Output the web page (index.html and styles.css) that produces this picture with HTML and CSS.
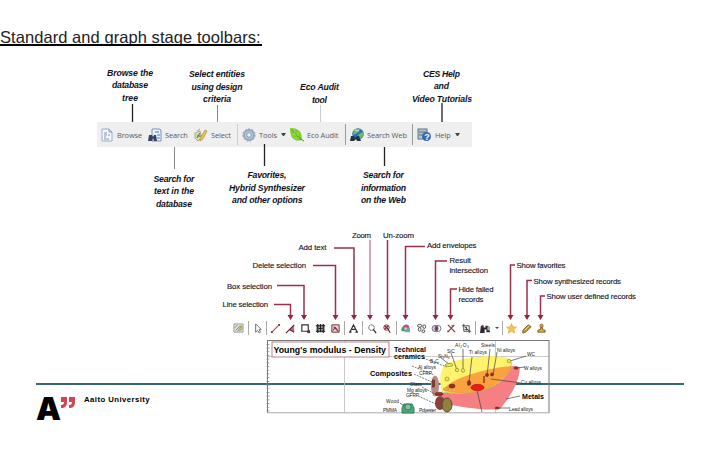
FILE: index.html
```html
<!DOCTYPE html>
<html lang="en">
<head>
<meta charset="utf-8">
<title>Standard and graph stage toolbars</title>
<link rel="stylesheet" href="styles.css">
</head>
<body>
<main class="slide">
<h1 class="title">Standard and graph stage toolbars:</h1>

<svg class="notes notes-top" viewBox="0 60 720 62">
  <g class="caption">
    <text x="107" y="75.500" textLength="46">Browse the</text><text x="112" y="88" textLength="36">database</text><text x="122" y="101" textLength="16">tree</text>
    <text x="189" y="77" textLength="56">Select entities</text><text x="191.500" y="89.500" textLength="51">using design</text><text x="203" y="102" textLength="28">criteria</text>
    <text x="300" y="90" textLength="39">Eco Audit</text><text x="312" y="103" textLength="15">tool</text>
    <text x="423" y="77" textLength="37">CES Help</text><text x="434" y="89" textLength="15">and</text><text x="412" y="102" textLength="60">Video Tutorials</text>
  </g>
  <path class="lead" d="M132.500 104V122M442 103V122"/><path class="lead soft" d="M217.500 105V122"/><path class="lead faint" d="M320.500 105V122"/>
</svg>

<nav class="toolbar">
  <svg class="icon" viewBox="0 0 14 16"><path d="M2 2h7l3 3v9H2z" fill="#f4f8fc" stroke="#9aaec8"/><path d="M4 6h3M4 8h3M4 10h2M8 8h2M4 12h5" stroke="#7e94b6"/><path d="M9 2v3h3" fill="none" stroke="#8097b4"/></svg>
  <span>Browse</span>
  <svg class="icon" viewBox="0 0 14 16"><path d="M4 2h8l1 2v10H4z" fill="#e9f3fd" stroke="#7894b6"/><path d="M7 5h4M9 8h3M9 11h3" stroke="#4e79ac"/><path d="M1 8h3l1 2 1-2h2l1 6H6l-1-3-1 3H0z" fill="#34435e"/></svg>
  <span>Search</span>
  <svg class="icon" viewBox="0 0 14 16"><path d="M1 6l5-2 2 7-4 3-3-3z" fill="#d4dfae" stroke="#a5b588"/><path d="M3 11l3-5M3 9h4" stroke="#58754b"/><path d="M6 12l5-9 2 1-4 8-3 2z" fill="#f0c64e" stroke="#9a813f" stroke-width=".6"/><path d="M3 4l3-2" stroke="#ce9696"/></svg>
  <span>Select</span>
  <i class="divider light"></i>
  <svg class="icon" viewBox="0 0 14 16"><circle cx="7" cy="8" r="5" fill="#b9cbdc" stroke="#8fa5bb" stroke-width="2"/><circle cx="7" cy="8" r="6.300" fill="none" stroke="#a3b2c1" stroke-dasharray="2 1.500"/><circle cx="7" cy="8" r="2.300" fill="#f3f5f7" stroke="#7892a9"/></svg>
  <span>Tools</span><b class="caret"></b>
  <svg class="icon" viewBox="0 0 14 16"><path d="M0 1c8 0 12 3 12 12-7 2-12-1-12-12z" fill="#80ce29"/><path d="M2 3c4 4 6 8 12 11" fill="none" stroke="#4c9625"/><path d="M4 3l1 4M2 7l5 1M8 5v4M4 11l5 0" stroke="#b0e568" stroke-width=".6"/></svg>
  <span>Eco Audit</span>
  <i class="divider"></i>
  <svg class="icon" viewBox="0 0 14 16"><circle cx="8" cy="7" r="5.800" fill="#2874b7"/><path d="M4 3l4-2 2 2-3 3-4 2zM9 7l4-2 1 3-4 4-2-2z" fill="#72b96d"/><path d="M5 3l4 1" stroke="#c5e6f4"/><path d="M1 9h3l1 2 2-2h2l2 5H7l-1-2-2 2H0z" fill="#25324c"/></svg>
  <span>Search Web</span>
  <i class="divider"></i>
  <svg class="icon" viewBox="0 0 14 16"><rect x="1" y="2" width="9" height="10" fill="#b7c6d4" stroke="#58718c"/><path d="M2 5h7M2 8h5" stroke="#52687f"/><circle cx="9.500" cy="9.500" r="4.500" fill="#376bb0"/><text x="7.200" y="13" class="question">?</text></svg>
  <span>Help</span><b class="caret"></b>
</nav>

<svg class="notes notes-mid" viewBox="0 147 720 173">
  <g class="caption">
    <text x="153.500" y="182" textLength="41">Search for</text><text x="154" y="194" textLength="40">text in the</text><text x="156" y="206.500" textLength="36">database</text>
    <text x="247.500" y="178" textLength="39">Favorites,</text><text x="229" y="191" textLength="76">Hybrid Synthesizer</text><text x="232" y="203" textLength="70.500">and other options</text>
    <text x="363" y="178" textLength="41">Search for</text><text x="361" y="191" textLength="45">information</text><text x="361" y="203" textLength="45">on the Web</text>
  </g>
  <path class="lead" d="M264.500 144V166M384.500 147V166"/><path class="lead soft" d="M174.500 147V169"/>
  <g class="label">
    <text x="352" y="238" textLength="19">Zoom</text><text x="383" y="238" textLength="31">Un-zoom</text><text x="298.500" y="250" textLength="28">Add text</text>
    <text x="252.500" y="268" textLength="53.500">Delete selection</text><text x="227" y="288.500" textLength="45">Box selection</text><text x="222.500" y="307" textLength="45.500">Line selection</text>
    <text x="427" y="248" textLength="49.500">Add envelopes</text><text x="449.500" y="263" textLength="21.500">Result</text><text x="449.500" y="273" textLength="38.500">intersection</text>
    <text x="458.500" y="291.500" textLength="35">Hide failed</text><text x="458.500" y="302" textLength="25">records</text><text x="516.500" y="268" textLength="49">Show favorites</text>
    <text x="533.500" y="283.500" textLength="87.500">Show synthesized records</text><text x="546.500" y="299" textLength="89.500">Show user defined records</text>
  </g>
  <path class="arrow" d="M274 304.500H290.500V316M277 285.500H304V316M313 265.500H335.500V316M334 248H354V316M387.500 240V316M425 246.500H405.500V316M447 261H435.500V316M457 289H450.500V316M515 265H510.500V316M532 280.500H527V316M545 296H540.500V316"/>
  <path class="arrow pale" d="M370 240V316"/>
  <path class="heads" d="M287.500 315h6l-3 5zM301 315h6l-3 5zM332.500 315h6l-3 5zM351 315h6l-3 5zM367 315h6l-3 5zM384.500 315h6l-3 5zM402.500 315h6l-3 5zM432.500 315h6l-3 5zM447.500 315h6l-3 5zM507.500 315h6l-3 5zM524 315h6l-3 5zM537.500 315h6l-3 5z"/>
</svg>

<nav class="stage-tools">
  <svg viewBox="0 0 12 12"><path d="M1 1h10v9H1z" fill="#e4e2ce" stroke="#999"/><path d="M2 5l3-3M3 8l5-5M5 9l5-6M7 9l3-3" stroke="#6b8480"/><path d="M7 3h3v3H7z" fill="#bba74c"/></svg><i></i>
  <svg viewBox="0 0 12 12"><path d="M4 1v9l2-2 2 3 1-1-1-3h2z" fill="#fff" stroke="#666"/></svg><i></i>
  <svg viewBox="0 0 12 12"><path d="M2 10l8-8" stroke="#a65460" stroke-width="1.300"/><path d="M1 9h2v2H1zM9 1h2v2H9z" fill="#8c2736"/></svg>
  <svg viewBox="0 0 12 12"><path d="M5 7l5-5v8z" fill="#b27279"/><path d="M1 11l9-9M5 7l5 3" stroke="#682333" stroke-width="1.300"/></svg>
  <svg viewBox="0 0 12 12"><path d="M2 2h7v7H2z" fill="#fff" stroke="#333" stroke-width="1.300"/><path d="M8 8h3v3H8z" fill="#682231"/></svg>
  <svg viewBox="0 0 12 12"><path d="M1 2h10v8H1z" fill="#aaa"/><path d="M1 3h10M1 9h10M3 1v10M6 1v9M9 1v10M4 6h4" stroke="#222" stroke-width="1.300"/></svg>
  <svg viewBox="0 0 12 12"><path d="M2 2h8v8H2z" fill="#ecdada" stroke="#513136"/><path d="M3 8l3-3 3 4M4 4l5 5" stroke="#983140" stroke-width="1.300" fill="none"/></svg><i></i>
  <svg viewBox="0 0 12 12"><path d="M1 10h3M8 10h3M2 10l4-8 4 8M4 7h4" stroke="#333" stroke-width="1.300" fill="none"/></svg><i></i>
  <svg viewBox="0 0 12 12"><circle cx="6" cy="5" r="3" fill="#fff" stroke="#454545" stroke-dasharray="2 .6"/><path d="M8 7l3 4" stroke="#333" stroke-width="1.500"/></svg>
  <svg viewBox="0 0 12 12"><circle cx="6" cy="5" r="3" fill="#edd3d3" stroke="#793945"/><path d="M8 7l2 4M4 3l4 4M8 3L4 7" stroke="#702535" stroke-width="1.200"/></svg><i></i>
  <svg viewBox="0 0 12 12"><path d="M2 9c-2-3 2-7 5-7v7z" fill="#3e9a75"/><ellipse cx="7" cy="5" rx="3" ry="3.500" fill="#b34b94"/><path d="M7 5h4v5H5z" fill="#7b9cc6"/><circle cx="6" cy="6" r="1.500" fill="#e8cf66"/></svg>
  <svg viewBox="0 0 12 12"><g fill="#fff" stroke="#444"><ellipse cx="4" cy="3" rx="2.500" ry="1.500"/><ellipse cx="9" cy="4" rx="1.500" ry="2"/><ellipse cx="4" cy="7" rx="1.500" ry="2"/><circle cx="8" cy="9" r="1.500"/></g></svg>
  <svg viewBox="0 0 12 12"><ellipse cx="4.500" cy="6" rx="3.300" ry="3.300" fill="#d8d2e0" stroke="#68647e"/><ellipse cx="7.500" cy="6" rx="3.300" ry="3.300" fill="none" stroke="#68647e"/><ellipse cx="6" cy="6" rx="1.400" ry="2.500" fill="#762b5a"/></svg>
  <svg viewBox="0 0 12 12"><path d="M2 2l8 8M9 2L2 10" stroke="#8b3940" stroke-width="1.300"/><path d="M6 3h3M2 8v2" fill="none" stroke="#555"/></svg>
  <svg viewBox="0 0 12 12"><path d="M3 1v8h8M1 3h8v8M4 4l5 5M4 7h4M6 4v4" stroke="#444" fill="none"/></svg><i></i>
  <svg viewBox="0 0 12 12"><path d="M1 3h3v2h2V3h3l2 7H7V7H5v4H0z" fill="#292a35"/><path d="M8 4h3v4H8z" fill="#aaa"/><circle cx="3" cy="3" r="1" fill="#b84955"/></svg>
  <b class="caret"></b><i></i>
  <svg viewBox="0 0 12 12"><path d="M6 .5l1.600 3.700 4 .3-3 2.700 1 4L6 9l-3.600 2.200 1-4-3-2.700 4-.3z" fill="#f5c44d" stroke="#d99e3e" stroke-width=".6"/></svg>
  <svg viewBox="0 0 12 12"><path d="M2 8l6-6 3 2-6 6-3 1z" fill="#c99837" stroke="#785724"/><path d="M4 8l5-5" stroke="#efd56d"/></svg>
  <svg viewBox="0 0 12 12"><circle cx="6" cy="3" r="1.800" fill="#d1a34d" stroke="#74572e" stroke-width=".7"/><path d="M5 5h2v2l3 1v2H2V8l3-1z" fill="#e0b144" stroke="#75572d"/></svg>
</nav>

<section class="bottom">
  <svg class="chart" viewBox="267 336 284 80">
    <path d="M344.500 341V413M495.500 341V413M267 356.500H549" fill="none" stroke="#bbb" stroke-width=".8"/>
    <path d="M267.500 340.500H549M267.500 340V413M549 340V413" fill="none" stroke="#777"/><path d="M267 412.800H549" stroke="#aaa"/>
    <path d="M268 344V413" stroke="#888" stroke-width="3" stroke-dasharray=".7 3"/>
    <path d="M441 393c40 1 60-10 71-27l8 1c-1 18-12 32-20 42-14 2-42-2-56-6z" fill="#f57f83"/>
    <path d="M442 392c-4-15-1-27 8-30 20-6 50-8 60-3 6 6-5 23-20 29-16 6-34 7-48 4z" fill="#fff36e"/>
    <path d="M444 391c0-5 10-11 22-15 14-5 30-9 46-10-5 10-14 19-25 23-15 5-31 5-43 2z" fill="#f9a23e"/>
    <path d="M441 392c40 5 65-5 71-30" fill="none" stroke="#b89a54" stroke-width=".6"/>
    <ellipse cx="435" cy="386" rx="4" ry="10.500" fill="#bc8a86"/><ellipse cx="440" cy="403" rx="5" ry="7" fill="#8b4038"/><ellipse cx="447" cy="405" rx="5" ry="7" fill="#93813b" stroke="#564c2e"/>
    <path d="M402 413v-5l2-4h8l2 4v5z" fill="#48a977" stroke="#357756"/><circle cx="408" cy="407" r="3" fill="#80c4a0" stroke="#3c7b60"/>
    <g stroke="#444" stroke-width=".7" fill="none"><path d="M441 358l8 6M451 353l6 17M463 349v21M472 357l-3 25M490 349l-3 27M497 352l-4 23M526 356l-16 5M525 367l-9 1M521 383l-30-4M509 408h-11M477 390l5 22M520 396l-14 3M400 403l4 3"/><path d="M414 374l20 9M422 387l13 7M418 396l18 8M423 358l24 9M412 366l22 9" stroke-dasharray="2 1"/></g>
    <g fill="#9a2d29" stroke="#592823" stroke-width=".6"><ellipse cx="452" cy="386" rx="3" ry="2"/><ellipse cx="439" cy="394" rx="4" ry="1.800"/><ellipse cx="469" cy="383" rx="1.700" ry="2.500"/><circle cx="487" cy="375" r="1.500"/><circle cx="492" cy="374.500" r="1.500"/><ellipse cx="516" cy="368" rx="2" ry="1.300"/><ellipse cx="497" cy="408" rx="2" ry="1"/><rect x="432.500" y="380" width="2" height="7"/></g>
    <path d="M484 376v7" stroke="#993620" stroke-width="1.500"/>
    <ellipse cx="477.500" cy="387.500" rx="6.500" ry="3.200" fill="#f51719" stroke="#931918" stroke-width=".6"/>
    <g fill="#ebe95b" stroke="#8d8732" stroke-width=".7"><ellipse cx="449" cy="365" rx="4" ry="1.500"/><circle cx="457" cy="370" r="1.700"/><circle cx="463" cy="370.500" r="1.800"/><circle cx="447" cy="379" r="2"/><circle cx="509" cy="361" r="1.800"/><ellipse cx="446" cy="389" rx="3" ry="1"/></g>
    <rect x="272" y="342" width="117" height="15" fill="#fff" stroke="#b78383"/>
    <g class="chart-head"><text x="273.500" y="353" textLength="112.500" lengthAdjust="spacingAndGlyphs">Young's modulus - Density</text></g>
    <g class="chart-group"><text x="394" y="352" textLength="32" lengthAdjust="spacingAndGlyphs">Technical</text><text x="394" y="359" textLength="31" lengthAdjust="spacingAndGlyphs">ceramics</text><text x="370" y="376" textLength="42" lengthAdjust="spacingAndGlyphs">Composites</text><text x="522" y="398.500" textLength="22" lengthAdjust="spacingAndGlyphs">Metals</text></g>
    <g class="chart-label"><text x="447" y="353">SiC</text><text x="455" y="347" textLength="14">Al₂O₃</text><text x="438" y="358">Si₃N₄</text><text x="430" y="363">B₄C</text><text x="481" y="347" textLength="14">Steels</text><text x="469" y="354" textLength="18">Ti alloys</text><text x="497" y="351.500" textLength="18">Ni alloys</text><text x="527" y="356">WC</text><text x="524" y="370" textLength="18">W alloys</text><text x="521" y="384" textLength="20">Cu alloys</text><text x="509" y="411" textLength="24">Lead alloys</text><text x="418" y="369" textLength="18">Al alloys</text><text x="419" y="374.500" textLength="13">CFRP</text><text x="410" y="386" textLength="12">Glass</text><text x="407" y="391.500" textLength="20">Mg alloys</text><text x="406" y="397" textLength="13">GFRP</text><text x="386" y="403" textLength="13">Wood</text><text x="383" y="412" textLength="14">PMMA</text><text x="419" y="412" textLength="17">Polyester</text></g>
  </svg>
  <hr class="rule">
  <footer class="brand">
    <svg class="logo" viewBox="0 0 48 28"><text x="0" y="24" textLength="25" lengthAdjust="spacingAndGlyphs">A</text><g class="marks"><path d="M25 1h6v5c0 4-2 6-6 6V9c2 0 3-1 3-3h-3z"/><path d="M33 1h6v5c0 4-2 6-6 6V9c2 0 3-1 3-3h-3z"/></g></svg>
    <strong>Aalto University</strong>
  </footer>
</section>
</main>
</body>
</html>
```

FILE: styles.css
```css
* { box-sizing: border-box; }
body { margin: 0; background: #fff; font-family: "Liberation Sans", sans-serif; }
.slide { width: 720px; height: 450px; overflow: hidden; }
.title {
  width: 262px; height: 19px; margin: 27px 0 14px; overflow: hidden;
  border-bottom: 2px solid #000; font-size: 16.5px; line-height: 21px;
  font-weight: 400; letter-spacing: .06px; white-space: nowrap; color: #222;
}
svg { display: block; overflow: visible; }
.notes { position: relative; width: 720px; }
.notes-top { height: 62px; }
.notes-mid { height: 173px; }
.caption { font-size: 8.7px; font-weight: 700; font-style: italic; fill: #10101c; }
.label { font-size: 7.8px; fill: #111126; stroke: #111126; stroke-width: .12px; }
.lead { stroke: #222; stroke-width: 1.3; }
.soft { stroke: #888; stroke-width: 1; }
.faint { stroke: #ccc; stroke-width: 1; }
.arrow { fill: none; stroke: #983149; stroke-width: 1.5; }
.pale { stroke: #c58b98; }
.heads { fill: #942440; }
.toolbar {
  display: grid; align-items: center; width: 375px; height: 25px; margin-left: 97px; padding-left: 3px;
  grid-template-columns: 17px 31px 17px 29px 17px 26px 5px 17px 22px 9px 17px 38px 5px 17px 45px 5px 18px 20px 8px;
  background: #efefef; color: #5a5866; font: 7.4px "Open Sans", sans-serif; letter-spacing: -.1px; white-space: nowrap;
}
.icon { width: 14px; height: 16px; }
.question { fill: #fff; font: 700 9px "Liberation Sans", sans-serif; }
.divider { width: 1px; height: 21px; background: #999; }
.divider.light { background: #ccc; }
.caret { border: 2.5px solid transparent; border-top: 3px solid #444; border-bottom: 0; width: 5px; }
.stage-tools {
  display: grid; align-items: center; justify-items: center; width: 318px; height: 16px; margin-left: 230px;
  grid-template-columns: 16px 4px 14px 4px 14px 16px 14px 16px 14px 4px 15px 3px 14px 17px 2px 16px 16px 14px 16px 14px 4px 16px 7px 4px 14px 16px 14px;
}
.stage-tools svg { width: 11px; height: 11px; }
.stage-tools i { width: 1px; height: 14px; background: #aaa; }
.stage-tools .caret { border-width: 2px; border-bottom: 0; width: 4px; }
.bottom { display: grid; grid-template-rows: 49px 65px; }
.chart { grid-area: 1 / 1 / 3 / 2; width: 284px; height: 80px; margin-left: 267px; z-index: 1; }
.rule { grid-area: 1 / 1; align-self: end; width: 648px; height: 2px; margin: 0 0 0 36px; border: 0; background: #326778; }
.brand { grid-area: 2 / 1; display: flex; align-items: flex-start; width: 200px; padding: 11px 0 0 36px; }
.logo { width: 48px; height: 28px; font: 900 32px Inter, sans-serif; }
.marks { fill: #d64553; }
.brand strong { margin-top: -4px; font-size: 7.8px; line-height: 16px; letter-spacing: .42px; white-space: nowrap; color: #000; }
.chart-head { font-size: 9.8px; font-weight: 700; }
.chart-group { font-size: 7.7px; font-weight: 700; }
.chart-label { font-size: 4.8px; fill: #222; }
```
